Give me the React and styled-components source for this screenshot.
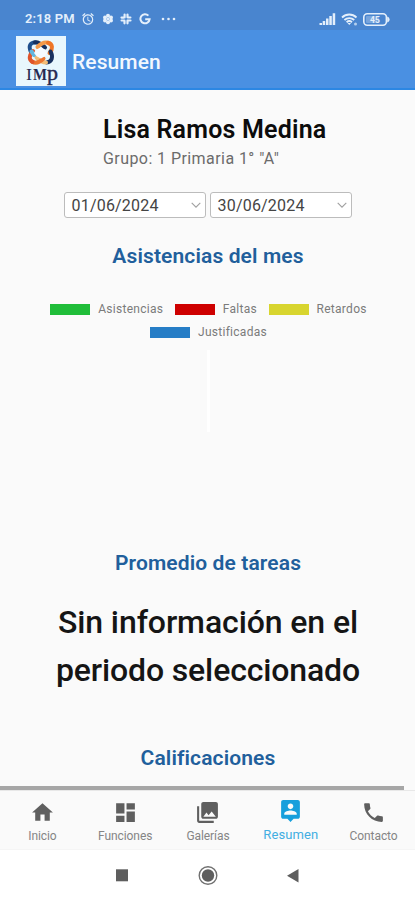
import React from 'react';
import styled, { createGlobalStyle } from 'styled-components';
import { MdHome, MdDashboard, MdPhotoLibrary, MdPhone, MdAlarm } from 'react-icons/md';

const GlobalStyle = createGlobalStyle`
  * { box-sizing: border-box; }
  body { margin: 0; font-family: Roboto, sans-serif; background: #fafafa; }
`;

const Screen = styled.div`
  width: 415px;
  height: 900px;
  display: flex;
  flex-direction: column;
  overflow: hidden;
  background: #fafafa;
`;

const StatusBar = styled.div`
  height: 30px;
  flex: none;
  display: flex;
  align-items: center;
  justify-content: space-between;
  padding: 8px 25px 0 25px;
  background: #4985cf;
  color: #e4effb;
`;

const StatusGroup = styled.div`
  display: flex;
  align-items: center;
  gap: ${(p) => p.$gap}px;
  svg { display: block; }
`;

const Clock = styled.span`
  font-size: 13px;
  font-weight: 600;
  line-height: 22px;
  letter-spacing: 0.15px;
`;

const AppBar = styled.header`
  height: 60px;
  flex: none;
  display: flex;
  align-items: flex-start;
  gap: 6px;
  padding: 6px 16px 0;
  background: #4a90e2;
  border-bottom: 2px solid #2c87e3;
`;

const Logo = styled.div`
  width: 50px;
  height: 50px;
  background: #e8f7fd;
  svg { display: block; }
`;

const BarTitle = styled.h1`
  margin: 0;
  font-size: 21px;
  font-weight: 500;
  line-height: 52px;
  letter-spacing: 0.1px;
  color: #f3f8fe;
`;

const Content = styled.main`
  flex: 1;
  min-height: 0;
  display: flex;
  flex-direction: column;
  align-items: center;
  padding: 25px 0 0 1px;
`;

const Student = styled.section`
  width: 210px;
  white-space: nowrap;
`;

const StudentName = styled.h2`
  margin: 0;
  font-size: 25px;
  font-weight: 600;
  line-height: 30px;
  letter-spacing: 0.2px;
  color: #0c0c0c;
`;

const StudentGroup = styled.p`
  margin: 4px 0 0;
  font-size: 16px;
  line-height: 20px;
  letter-spacing: 0.43px;
  color: #6b6b6b;
`;

const DateRow = styled.div`
  display: flex;
  gap: 4px;
  margin: 23px 0 0 -1px;
`;

const DateField = styled.div`
  width: 142px;
  height: 26px;
  display: flex;
  align-items: center;
  justify-content: space-between;
  padding: 0 4px 0 7px;
  border: 1px solid #bcbcbc;
  border-radius: 3px;
  background: #fff;
  font-size: 16px;
  letter-spacing: 0.2px;
  color: #444;
`;

const SectionTitle = styled.h3`
  margin: ${(p) => p.$top}px 0 0;
  font-size: 21px;
  font-weight: 600;
  line-height: 28px;
  letter-spacing: 0.12px;
  color: #215f9c;
`;

const Legend = styled.div`
  display: flex;
  flex-direction: column;
  align-items: center;
  gap: 3px;
  margin: 29px 0 0 1px;
`;

const LegendRow = styled.div`
  display: flex;
  gap: 11.5px;
`;

const LegendItem = styled.div`
  display: flex;
  align-items: center;
  gap: 8px;
  font-size: 12px;
  line-height: 20px;
  letter-spacing: 0.28px;
  color: #7b7b7b;
`;

const Swatch = styled.span`
  width: 40px;
  height: 11px;
  background: ${(p) => p.$color};
`;

const Chart = styled.div`
  width: 3px;
  height: 82px;
  margin: 8px 0 117px;
  background: #fff;
`;

const EmptyMessage = styled.p`
  margin: 21px 0 0;
  font-size: 32px;
  font-weight: 500;
  line-height: 48px;
  text-align: center;
  color: #151515;
`;

const MessageLine = styled.span`
  display: block;
  letter-spacing: ${(p) => p.$track}px;
`;

const ScrollTrack = styled.div`
  width: 404px;
  height: 4px;
  flex: none;
  background: #a6a6a6;
`;

const TabBar = styled.nav`
  height: 60px;
  flex: none;
  display: grid;
  grid-template-columns: repeat(5, 1fr);
  padding-left: 1px;
  border-top: 1px solid #e8e8e8;
  border-bottom: 1px solid #f5f5f5;
`;

const Tab = styled.a`
  display: flex;
  flex-direction: column;
  align-items: center;
  padding-top: ${(p) => (p.$active ? 7 : 9)}px;
  color: ${(p) => (p.$active ? '#179fdc' : '#5f5f5f')};
  svg { display: block; flex: none; }
`;

const TabLabel = styled.span`
  margin-top: ${(p) => (p.$active ? 4 : 3)}px;
  font-size: ${(p) => (p.$active ? 13 : 12)}px;
  line-height: 16px;
  letter-spacing: ${(p) => (p.$active ? 0.1 : -0.08)}px;
  color: ${(p) => (p.$active ? '#42aee2' : '#858585')};
`;

const SystemNav = styled.div`
  height: 50px;
  flex: none;
  display: flex;
  justify-content: center;
  align-items: center;
  gap: 61px;
  background: #fff;
  svg { display: block; }
`;

const Chevron = () => (
  <svg width="10" height="8" viewBox="0 0 10 8" fill="none" stroke="#a0a0a0" strokeWidth="1.1">
    <path d="M.7 1.8 5 6.2 9.3 1.8" />
  </svg>
);

const PersonPin = () => (
  <svg width="25" height="25" viewBox="0 0 24 24" fill="currentColor">
    <path d="M19 2H5c-1.11 0-2 .9-2 2v14c0 1.1.89 2 2 2h4l3 3 3-3h4c1.1 0 2-.9 2-2V4c0-1.1-.9-2-2-2zm-7 3.3c1.49 0 2.7 1.21 2.7 2.7s-1.21 2.7-2.7 2.7S9.3 9.49 9.3 8s1.21-2.7 2.7-2.7zM18 16H6v-.9c0-2 4-3.1 6-3.1s6 1.1 6 3.1v.9z" />
  </svg>
);

const SchoolLogo = () => (
  <svg width="50" height="50" viewBox="0 0 50 50">
    <g fill="none" strokeWidth="4" strokeLinecap="round">
      <path d="M15.5 17C11.5 10 14.5 6 20 6.5" stroke="#1d4f8c" />
      <path d="M19 6.3C23 6 26 8.5 29 11.5" stroke="#15305f" />
      <path d="M21.5 11C26 6.5 30 5.5 33.5 7.5" stroke="#f29a4a" />
      <path d="M32 6.7C37 8 37 13 33.5 17" stroke="#ee7626" />
      <path d="M34.5 15.5C37.5 21 36 26 30.5 26.5" stroke="#17305f" />
      <path d="M30 26.5C26 26.5 23 24 20.5 21.5" stroke="#f3bd77" />
      <path d="M27.5 22.5C23 27 19 27.5 16 25.5" stroke="#ec7530" />
      <path d="M16.5 26C12.5 23.5 13 19.5 17 15" stroke="#df552b" />
      <path d="M15.5 15.5 18 19" stroke="#62b7df" />
    </g>
    <path d="M25 11.5 29 13.5 31.5 17 28.5 20.5 25 22.5 21 20.5 18 17 21.5 13z" fill="#f6fbff" />
    <g fill="#262a51" fontFamily="Liberation Serif, serif">
      <text x="10" y="44" fontSize="16" textLength="6" lengthAdjust="spacingAndGlyphs">I</text>
      <text x="17" y="44" fontSize="16" textLength="14" lengthAdjust="spacingAndGlyphs" fontWeight="700">M</text>
      <text x="31" y="44" fontSize="20" textLength="11" lengthAdjust="spacingAndGlyphs" stroke="#262a51" strokeWidth=".4">p</text>
    </g>
  </svg>
);

const FlowerIcon = () => (
  <svg width="12" height="12" viewBox="0 0 12 12" fill="currentColor">
    <circle cx="6" cy="2.8" r="2" /><circle cx="6" cy="9.2" r="2" />
    <circle cx="3" cy="4.5" r="2" /><circle cx="9" cy="4.5" r="2" />
    <circle cx="3" cy="7.6" r="2" /><circle cx="9" cy="7.6" r="2" />
    <circle cx="6" cy="6" r="1.2" />
  </svg>
);

const PinwheelIcon = () => (
  <svg width="12" height="12" viewBox="0 0 12 12" fill="none" stroke="currentColor" strokeWidth="2.2" strokeLinecap="round">
    <path d="M4.6 1.5v3M1.5 4.6h2.2M7.5 1.6v2.6M7.8 4.5h2.6M1.6 7.5h2.7M4.5 7.8v2.5M7.5 7.6v2.7M8 7.5h2.5" />
  </svg>
);

const GoogleIcon = () => (
  <svg width="12" height="12" viewBox="0 0 12 12" fill="none" stroke="currentColor" strokeWidth="2">
    <path d="M9.4 2.6A4.6 4.6 0 1 0 10.6 6.3H6.2" />
  </svg>
);

const DotsIcon = () => (
  <svg width="20" height="4" viewBox="0 0 20 4" fill="currentColor">
    <circle cx="6" cy="2" r="1.3" /><circle cx="11.5" cy="2" r="1.3" /><circle cx="17" cy="2" r="1.3" />
  </svg>
);

const SignalIcon = () => (
  <svg width="17" height="12" viewBox="0 0 17 12" fill="currentColor">
    <path d="M.5 10H3v2H.5zM3.7 8h2.5v4H3.7zM7 5.5h2.5V12H7zM10.3 3h2.5v9h-2.5zM13.7.3h2.5V12h-2.5z" />
  </svg>
);

const WifiIcon = () => (
  <svg width="17" height="13" viewBox="0 0 17 13" fill="none" stroke="currentColor" strokeWidth="1.8">
    <path d="M1 4.5c4.2-4 10.3-4 14.5 0M3.4 7c2.8-2.6 7-2.6 9.8 0M5.6 9.2c1.6-1.4 3.8-1.4 5.4 0" />
    <path d="m6.5 10 1.8 2 1.8-2z" fill="currentColor" stroke="none" />
    <circle cx="14.5" cy="11" r="1.5" fill="currentColor" stroke="none" opacity=".7" />
  </svg>
);

const BatteryIcon = () => (
  <svg width="27" height="13" viewBox="0 0 27 13">
    <rect x=".8" y=".8" width="22.6" height="11.4" rx="3.4" fill="none" stroke="currentColor" strokeWidth="1.6" />
    <path d="M24.2 3.4c3.2 1.4 3.2 4.8 0 6.2z" fill="currentColor" />
    <rect x="3" y="3" width="13" height="7" rx="1" fill="currentColor" opacity=".3" />
    <text x="12" y="9.6" fontSize="8.5" fontWeight="700" fontFamily="Roboto, sans-serif" fill="currentColor" textAnchor="middle">45</text>
  </svg>
);

const legend = [
  [
    { label: 'Asistencias', color: '#20bd39' },
    { label: 'Faltas', color: '#ce0000' },
    { label: 'Retardos', color: '#d8d52f' },
  ],
  [{ label: 'Justificadas', color: '#267dc6' }],
];

const tabs = [
  { label: 'Inicio', icon: <MdHome size={25} /> },
  { label: 'Funciones', icon: <MdDashboard size={25} /> },
  { label: 'Galerías', icon: <MdPhotoLibrary size={25} /> },
  { label: 'Resumen', icon: <PersonPin />, active: true },
  { label: 'Contacto', icon: <MdPhone size={25} /> },
];

export default function App() {
  return (
    <Screen>
      <GlobalStyle />
      <StatusBar>
        <StatusGroup $gap={6.5}>
          <Clock>2:18 PM</Clock>
          <MdAlarm size={14} />
          <FlowerIcon />
          <PinwheelIcon />
          <GoogleIcon />
          <DotsIcon />
        </StatusGroup>
        <StatusGroup $gap={5}>
          <SignalIcon />
          <WifiIcon />
          <BatteryIcon />
        </StatusGroup>
      </StatusBar>
      <AppBar>
        <Logo><SchoolLogo /></Logo>
        <BarTitle>Resumen</BarTitle>
      </AppBar>
      <Content>
        <Student>
          <StudentName>Lisa Ramos Medina</StudentName>
          <StudentGroup>Grupo: 1 Primaria 1° "A"</StudentGroup>
        </Student>
        <DateRow>
          <DateField>01/06/2024<Chevron /></DateField>
          <DateField>30/06/2024<Chevron /></DateField>
        </DateRow>
        <SectionTitle $top={24}>Asistencias del mes</SectionTitle>
        <Legend>
          {legend.map((row) => (
            <LegendRow key={row[0].label}>
              {row.map((item) => (
                <LegendItem key={item.label}>
                  <Swatch $color={item.color} />
                  {item.label}
                </LegendItem>
              ))}
            </LegendRow>
          ))}
        </Legend>
        <Chart />
        <SectionTitle $top={0}>Promedio de tareas</SectionTitle>
        <EmptyMessage>
          <MessageLine $track={-0.1}>Sin información en el</MessageLine>
          <MessageLine $track={-0.14}>periodo seleccionado</MessageLine>
        </EmptyMessage>
        <SectionTitle $top={50}>Calificaciones</SectionTitle>
      </Content>
      <ScrollTrack />
      <TabBar>
        {tabs.map((tab) => (
          <Tab key={tab.label} $active={tab.active}>
            {tab.icon}
            <TabLabel $active={tab.active}>{tab.label}</TabLabel>
          </Tab>
        ))}
      </TabBar>
      <SystemNav>
        <svg width="24" height="24" viewBox="0 0 24 24"><path d="M5 6.3h12v12H5z" fill="#5e5e5e" /></svg>
        <svg width="24" height="24" viewBox="0 0 24 24">
          <circle cx="12" cy="12.5" r="8.8" fill="none" stroke="#707070" strokeWidth="1.4" />
          <circle cx="12" cy="12.5" r="6.2" fill="#5e5e5e" />
        </svg>
        <svg width="24" height="24" viewBox="0 0 24 24"><path d="M17.5 6v13.5L6 12.8z" fill="#5e5e5e" /></svg>
      </SystemNav>
    </Screen>
  );
}
